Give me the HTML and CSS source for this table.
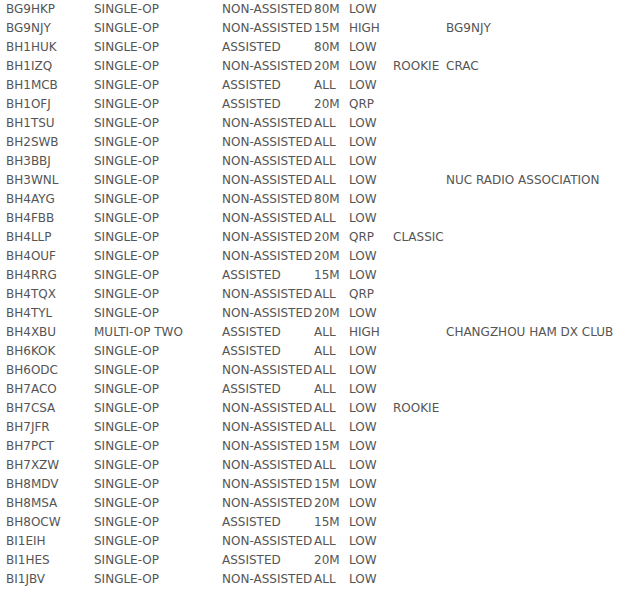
FILE: index.html
```html
<!DOCTYPE html>
<html>
<head>
<meta charset="utf-8">
<link rel="stylesheet" href="styles.css">
</head>
<body>
<table class="entries">
<colgroup>
<col class="c-call"><col class="c-cat"><col class="c-asst"><col class="c-band"><col class="c-pwr"><col class="c-ovl"><col class="c-club">
</colgroup>
<tbody>
<tr><td>BG9HKP</td><td>SINGLE-OP</td><td>NON-ASSISTED</td><td>80M</td><td>LOW</td><td></td><td></td></tr>
<tr><td>BG9NJY</td><td>SINGLE-OP</td><td>NON-ASSISTED</td><td>15M</td><td>HIGH</td><td></td><td>BG9NJY</td></tr>
<tr><td>BH1HUK</td><td>SINGLE-OP</td><td>ASSISTED</td><td>80M</td><td>LOW</td><td></td><td></td></tr>
<tr><td>BH1IZQ</td><td>SINGLE-OP</td><td>NON-ASSISTED</td><td>20M</td><td>LOW</td><td>ROOKIE</td><td>CRAC</td></tr>
<tr><td>BH1MCB</td><td>SINGLE-OP</td><td>ASSISTED</td><td>ALL</td><td>LOW</td><td></td><td></td></tr>
<tr><td>BH1OFJ</td><td>SINGLE-OP</td><td>ASSISTED</td><td>20M</td><td>QRP</td><td></td><td></td></tr>
<tr><td>BH1TSU</td><td>SINGLE-OP</td><td>NON-ASSISTED</td><td>ALL</td><td>LOW</td><td></td><td></td></tr>
<tr><td>BH2SWB</td><td>SINGLE-OP</td><td>NON-ASSISTED</td><td>ALL</td><td>LOW</td><td></td><td></td></tr>
<tr><td>BH3BBJ</td><td>SINGLE-OP</td><td>NON-ASSISTED</td><td>ALL</td><td>LOW</td><td></td><td></td></tr>
<tr><td>BH3WNL</td><td>SINGLE-OP</td><td>NON-ASSISTED</td><td>ALL</td><td>LOW</td><td></td><td>NUC RADIO ASSOCIATION</td></tr>
<tr><td>BH4AYG</td><td>SINGLE-OP</td><td>NON-ASSISTED</td><td>80M</td><td>LOW</td><td></td><td></td></tr>
<tr><td>BH4FBB</td><td>SINGLE-OP</td><td>NON-ASSISTED</td><td>ALL</td><td>LOW</td><td></td><td></td></tr>
<tr><td>BH4LLP</td><td>SINGLE-OP</td><td>NON-ASSISTED</td><td>20M</td><td>QRP</td><td>CLASSIC</td><td></td></tr>
<tr><td>BH4OUF</td><td>SINGLE-OP</td><td>NON-ASSISTED</td><td>20M</td><td>LOW</td><td></td><td></td></tr>
<tr><td>BH4RRG</td><td>SINGLE-OP</td><td>ASSISTED</td><td>15M</td><td>LOW</td><td></td><td></td></tr>
<tr><td>BH4TQX</td><td>SINGLE-OP</td><td>NON-ASSISTED</td><td>ALL</td><td>QRP</td><td></td><td></td></tr>
<tr><td>BH4TYL</td><td>SINGLE-OP</td><td>NON-ASSISTED</td><td>20M</td><td>LOW</td><td></td><td></td></tr>
<tr><td>BH4XBU</td><td>MULTI-OP TWO</td><td>ASSISTED</td><td>ALL</td><td>HIGH</td><td></td><td>CHANGZHOU HAM DX CLUB</td></tr>
<tr><td>BH6KOK</td><td>SINGLE-OP</td><td>ASSISTED</td><td>ALL</td><td>LOW</td><td></td><td></td></tr>
<tr><td>BH6ODC</td><td>SINGLE-OP</td><td>NON-ASSISTED</td><td>ALL</td><td>LOW</td><td></td><td></td></tr>
<tr><td>BH7ACO</td><td>SINGLE-OP</td><td>ASSISTED</td><td>ALL</td><td>LOW</td><td></td><td></td></tr>
<tr><td>BH7CSA</td><td>SINGLE-OP</td><td>NON-ASSISTED</td><td>ALL</td><td>LOW</td><td>ROOKIE</td><td></td></tr>
<tr><td>BH7JFR</td><td>SINGLE-OP</td><td>NON-ASSISTED</td><td>ALL</td><td>LOW</td><td></td><td></td></tr>
<tr><td>BH7PCT</td><td>SINGLE-OP</td><td>NON-ASSISTED</td><td>15M</td><td>LOW</td><td></td><td></td></tr>
<tr><td>BH7XZW</td><td>SINGLE-OP</td><td>NON-ASSISTED</td><td>ALL</td><td>LOW</td><td></td><td></td></tr>
<tr><td>BH8MDV</td><td>SINGLE-OP</td><td>NON-ASSISTED</td><td>15M</td><td>LOW</td><td></td><td></td></tr>
<tr><td>BH8MSA</td><td>SINGLE-OP</td><td>NON-ASSISTED</td><td>20M</td><td>LOW</td><td></td><td></td></tr>
<tr><td>BH8OCW</td><td>SINGLE-OP</td><td>ASSISTED</td><td>15M</td><td>LOW</td><td></td><td></td></tr>
<tr><td>BI1EIH</td><td>SINGLE-OP</td><td>NON-ASSISTED</td><td>ALL</td><td>LOW</td><td></td><td></td></tr>
<tr><td>BI1HES</td><td>SINGLE-OP</td><td>ASSISTED</td><td>20M</td><td>LOW</td><td></td><td></td></tr>
<tr><td>BI1JBV</td><td>SINGLE-OP</td><td>NON-ASSISTED</td><td>ALL</td><td>LOW</td><td></td><td></td></tr>
</tbody>
</table>
</body>
</html>
```

FILE: styles.css
```css
html, body {
  margin: 0;
  padding: 0;
  background: #ffffff;
}
body {
  font-family: "DejaVu Sans", Verdana, sans-serif;
  font-size: 12px;
  color: #555555;
}
.entries {
  border-collapse: collapse;
  table-layout: fixed;
  width: 640px;
}
.entries td {
  padding: 0;
  height: 19px;
  line-height: 19px;
  white-space: nowrap;
  vertical-align: middle;
}
.entries td:first-child {
  padding-left: 6px;
}
.c-call { width: 94px; }
.c-cat { width: 128px; }
.c-asst { width: 92px; }
.c-band { width: 35px; }
.c-pwr { width: 44px; }
.c-ovl { width: 53px; }
.c-club { width: auto; }
```
